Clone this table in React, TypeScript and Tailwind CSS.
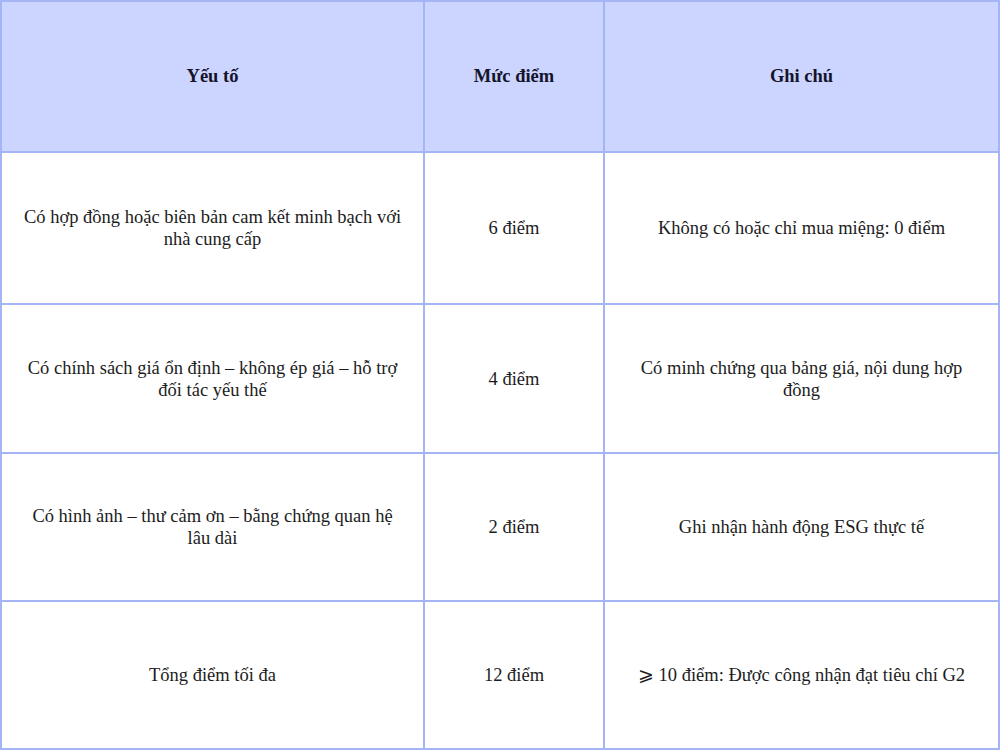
const rows = [
  {
    factor: "Có hợp đồng hoặc biên bản cam kết minh bạch với nhà cung cấp",
    score: "6 điểm",
    note: "Không có hoặc chỉ mua miệng: 0 điểm",
    h: "h-[152px]",
  },
  {
    factor: "Có chính sách giá ổn định – không ép giá – hỗ trợ đối tác yếu thế",
    score: "4 điểm",
    note: "Có minh chứng qua bảng giá, nội dung hợp đồng",
    h: "h-[149px]",
  },
  {
    factor: "Có hình ảnh – thư cảm ơn – bằng chứng quan hệ lâu dài",
    score: "2 điểm",
    note: "Ghi nhận hành động ESG thực tế",
    h: "h-[148px]",
  },
  {
    factor: "Tổng điểm tối đa",
    score: "12 điểm",
    note: "⩾ 10 điểm: Được công nhận đạt tiêu chí G2",
    h: "h-[148px]",
  },
];

export default function App() {
  return (
    <div className="w-[1000px] h-[750px] bg-white font-['Liberation_Serif','DejaVu_Serif',serif]">
      <table className="w-full border-collapse table-fixed text-center">
        <colgroup>
          <col className="w-[423px]" />
          <col className="w-[180px]" />
          <col />
        </colgroup>
        <thead>
          <tr className="h-[151px] bg-[#ccd5ff]">
            <th className="border-2 border-[#a5b4f5] px-[17px] text-[18.5px] font-bold text-[#14142b]">Yếu tố</th>
            <th className="border-2 border-[#a5b4f5] px-[17px] text-[18.5px] font-bold text-[#14142b]">Mức điểm</th>
            <th className="border-2 border-[#a5b4f5] px-[17px] text-[18.5px] font-bold text-[#14142b]">Ghi chú</th>
          </tr>
        </thead>
        <tbody>
          {rows.map((r, i) => (
            <tr key={i} className={r.h}>
              <td className="border-2 border-[#a5b4f5] px-[17px] text-[18.5px] leading-[22px] text-[#1c1c1c]">{r.factor}</td>
              <td className="border-2 border-[#a5b4f5] px-[17px] text-[18.5px] leading-[22px] text-[#1c1c1c]">{r.score}</td>
              <td className="border-2 border-[#a5b4f5] px-[17px] text-[18.5px] leading-[22px] text-[#1c1c1c]">{r.note}</td>
            </tr>
          ))}
        </tbody>
      </table>
    </div>
  );
}
